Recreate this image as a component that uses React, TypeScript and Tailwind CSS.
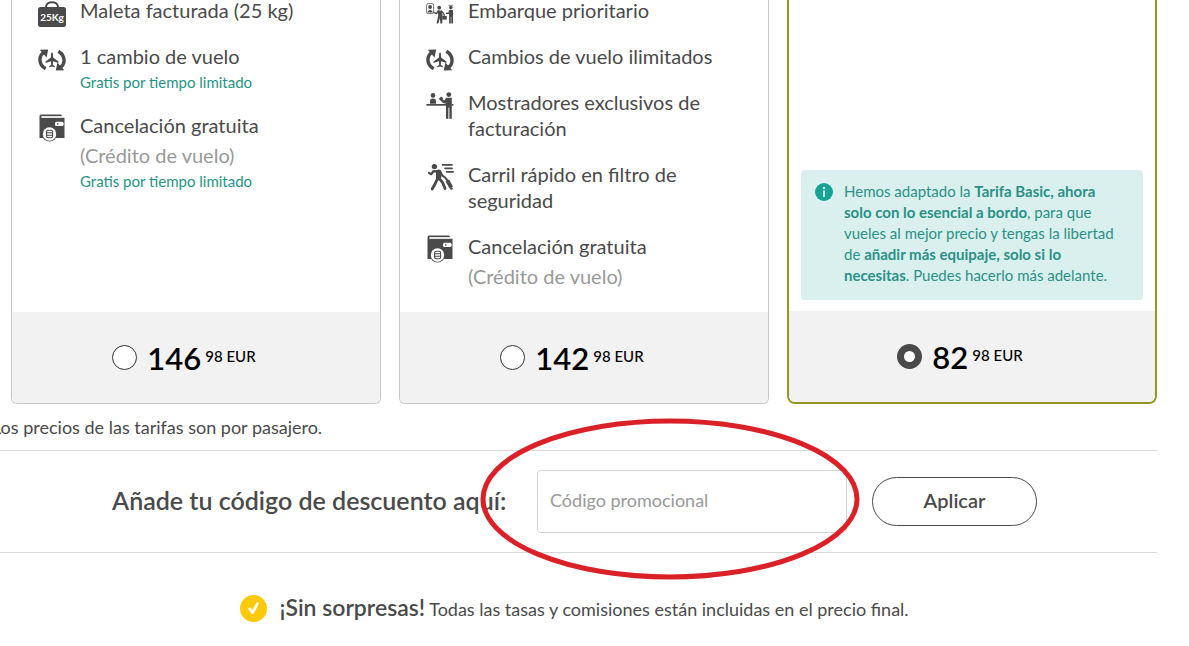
import type { ReactNode } from "react";

function BagIcon() {
  return (
    <svg viewBox="0 0 30 28" className="h-7 w-7.5" aria-hidden="true">
      <path d="M9 8 C9 1.5 21 1.5 21 8" fill="none" stroke="#4a4a4a" strokeWidth="2" />
      <rect x="1" y="8" width="28" height="20" rx="2.5" fill="#4a4a4a" />
      <text x="15" y="22" textAnchor="middle" fontSize="10" fontWeight="700" fill="#fff" fontFamily="Lato, sans-serif">
        25Kg
      </text>
    </svg>
  );
}

function ChangeIcon() {
  return (
    <svg viewBox="0 0 28 28" className="h-7 w-7" aria-hidden="true">
      <g fill="none" stroke="#4a4a4a" strokeWidth="3.4">
        <path d="M7.6 23.8 C-0.2 19 0.6 10 6.6 7.2" />
        <path d="M20.4 6.2 C28.2 11 27.4 20 21.4 22.8" />
      </g>
      <path d="M1.8 4.8 L10.2 4.4 L8.6 12.4 Z" fill="#4a4a4a" />
      <path d="M26.2 25.2 L17.8 25.6 L19.4 17.6 Z" fill="#4a4a4a" />
      <path
        d="M14 7.6 C14.8 7.6 15.1 9 15.1 12.6 L20.4 16.4 V18 L15.1 16.3 L14.8 19.8 L16.8 21.3 V22.3 L14 21.5 L11.2 22.3 V21.3 L13.2 19.8 L12.9 16.3 L7.6 18 V16.4 L12.9 12.6 C12.9 9 13.2 7.6 14 7.6 Z"
        fill="#4a4a4a"
      />
    </svg>
  );
}

function WalletIcon() {
  return (
    <svg viewBox="0 0 28 28" className="h-7 w-7" aria-hidden="true">
      <path d="M3 0.6 H22.5 Q24 0.8 24 2.4 H3.6 V3.7 H26.5 V24 H1.5 V2.4 Q1.5 0.6 3 0.6 Z" fill="#4a4a4a" />
      <path d="M3.4 2.9 H24" stroke="#fff" strokeWidth="1.2" />
      <rect x="17" y="7.8" width="8.6" height="4.2" rx="1.6" fill="#fff" />
      <circle cx="19.8" cy="9.9" r="0.8" fill="#4a4a4a" />
      <circle cx="11.5" cy="20" r="7.6" fill="#4a4a4a" />
      <circle cx="11.5" cy="20" r="6.7" fill="#fff" />
      <g fill="none" stroke="#4a4a4a" strokeWidth="1.1">
        <rect x="8.6" y="16.2" width="6" height="7.6" rx="1.6" />
        <path d="M8.6 18.8 H14.6 M8.6 21.3 H14.6" />
      </g>
    </svg>
  );
}

function BoardingIcon() {
  return (
    <svg viewBox="0 0 28 28" className="h-7 w-7" aria-hidden="true">
      <rect x="0.6" y="4.6" width="7" height="10" rx="1.6" fill="none" stroke="#777" strokeWidth="1" />
      <circle cx="4.1" cy="8" r="1.9" fill="#4a4a4a" />
      <path d="M1.6 13.6 C1.6 10.2 6.6 10.2 6.6 13.6 Z" fill="#4a4a4a" />
      <circle cx="13.2" cy="8.7" r="1.9" fill="#4a4a4a" />
      <path d="M13 11.6 L10.4 14.4 L7.4 13.4" fill="none" stroke="#4a4a4a" strokeWidth="1.4" />
      <path d="M11.4 11.4 L16 11.4 L16.6 17.6 L16.2 24.6 H14.4 L13.8 19 L12.4 24.6 H10.6 L12.2 16.6 Z" fill="#4a4a4a" />
      <path d="M16 12.4 L18.2 15.6 V17.4" fill="none" stroke="#4a4a4a" strokeWidth="1.3" />
      <rect x="16.4" y="17" width="4.4" height="3.6" fill="#4a4a4a" />
      <rect x="22.4" y="5.8" width="4.6" height="1.2" rx="0.6" fill="#999" />
      <circle cx="24.8" cy="8.6" r="1.8" fill="#4a4a4a" />
      <path d="M23 11 H27 V24.6 H25.3 V18 H24.8 V24.6 H23.1 V15 L20 15.2 V13.8 L22.6 13.4 Z" fill="#4a4a4a" />
    </svg>
  );
}

function CounterIcon() {
  return (
    <svg viewBox="0 0 28 28" className="h-7 w-7" aria-hidden="true">
      <g fill="#4a4a4a">
        <circle cx="7" cy="4.4" r="2.3" />
        <path d="M4 12.8 V10 Q4 7.4 7 7.4 Q10 7.4 10 10 V12.8 Z" />
        <rect x="0.4" y="13" width="19.6" height="1.7" />
        <rect x="25.4" y="13" width="2" height="1.7" />
        <circle cx="22.8" cy="3.6" r="2.4" />
        <path d="M20.2 6.8 H25.8 V27.8 H23.4 V16.8 H22.4 V27.8 H20 V12.8 L17.2 12 L12.8 8 L14 6.6 L18.2 9.4 Z" />
        <path d="M15 5.4 L17.4 7.2 L16.2 8.8 L13.8 7 Z" />
      </g>
    </svg>
  );
}

function FastLaneIcon() {
  return (
    <svg viewBox="0 0 28 28" className="h-7 w-7" aria-hidden="true">
      <g fill="none" stroke="#4a4a4a" strokeLinecap="round" strokeLinejoin="round">
        <path d="M16.6 1.8 H26 M19 5.3 H26 M20.6 8.8 H27.2" strokeWidth="1.7" />
        <path d="M11.6 8.4 L7.4 8.2 L5.4 11.2 L3 10" strokeWidth="2.2" />
        <path d="M12.6 9.2 L12.6 14.6" strokeWidth="5.4" />
        <path d="M11.6 15.6 L9.4 20.2 L6.2 26" strokeWidth="2.8" />
        <path d="M13.4 15.6 L16.6 19.6 L19 25.6" strokeWidth="2.8" />
        <path d="M14.4 8.6 L16.4 12.6 L19.4 14.8 L21.2 17.2" strokeWidth="2" />
      </g>
      <circle cx="8.4" cy="3.6" r="2.7" fill="#4a4a4a" />
      <path d="M19.6 18.4 L23 16.6 L27 23.4 L23.6 25.4 Z" fill="#4a4a4a" />
      <circle cx="25.4" cy="25.5" r="1.3" fill="#4a4a4a" />
    </svg>
  );
}

type Feature = { icon: ReactNode; title: string; detail?: string; promo?: string };

const plusFeatures: Feature[] = [
  { icon: <BagIcon />, title: "Maleta facturada (25 kg)" },
  { icon: <ChangeIcon />, title: "1 cambio de vuelo", promo: "Gratis por tiempo limitado" },
  {
    icon: <WalletIcon />,
    title: "Cancelación gratuita",
    detail: "(Crédito de vuelo)",
    promo: "Gratis por tiempo limitado",
  },
];

const premiumFeatures: Feature[] = [
  { icon: <BoardingIcon />, title: "Embarque prioritario" },
  { icon: <ChangeIcon />, title: "Cambios de vuelo ilimitados" },
  { icon: <CounterIcon />, title: "Mostradores exclusivos de facturación" },
  { icon: <FastLaneIcon />, title: "Carril rápido en filtro de seguridad" },
  { icon: <WalletIcon />, title: "Cancelación gratuita", detail: "(Crédito de vuelo)" },
];

function FeatureList({ items }: { items: Feature[] }) {
  return (
    <ul className="-mt-[3px] flex flex-col gap-5 pr-10 pb-[23px] pl-6">
      {items.map((item) => (
        <li key={item.title} className="flex gap-3">
          <span className="flex h-[26px] w-8 shrink-0 justify-center pt-0.5">{item.icon}</span>
          <div>
            <p className="text-[20px] leading-[26px]">{item.title}</p>
            {item.detail && <p className="mt-1 text-[20px] leading-[26px] text-[#999]">{item.detail}</p>}
            {item.promo && <p className="mt-1 text-[15px] leading-[19px] text-[#1f9484]">{item.promo}</p>}
          </div>
        </li>
      ))}
    </ul>
  );
}

function FareCard({ price, selected, children }: { price: string; selected?: boolean; children: ReactNode }) {
  return (
    <div
      className={
        selected
          ? "flex flex-col overflow-hidden rounded-b-lg border-2 border-t-0 border-[#93991f]"
          : "flex flex-col overflow-hidden rounded-b-md border border-t-0 border-[#c8c8c8]"
      }
    >
      <div className="flex flex-1 flex-col">{children}</div>
      <label className="flex h-[91px] items-center justify-center bg-[#f2f2f2] pr-6 text-black">
        <input
          type="radio"
          name="fare"
          defaultChecked={selected}
          className="mr-2.5 size-[25px] appearance-none rounded-full border border-[#333] bg-white checked:border-[7px] checked:border-[#4a4a4a]"
        />
        <span className="text-[31px] leading-9 font-semibold">{price}</span>
        <span className="ml-1 pb-1 text-[15px] leading-5 font-medium">98 EUR</span>
      </label>
    </div>
  );
}

export default function App() {
  return (
    <main className="overflow-hidden bg-white pb-6 font-['Lato',sans-serif] text-[#4a4a4a]">
      <div className="mr-8 ml-[11px] grid grid-cols-3 gap-[18px]">
        <FareCard price="146">
          <FeatureList items={plusFeatures} />
        </FareCard>
        <FareCard price="142">
          <FeatureList items={premiumFeatures} />
        </FareCard>
        <FareCard price="82" selected>
          <div className="mx-3 mt-auto mb-[11px] flex gap-[11px] rounded-sm bg-[#daf0ee] pt-[11px] pr-6 pb-3.5 pl-3.5 text-[15px] leading-[21px] text-[#2a9187]">
            <svg viewBox="0 0 18 18" className="mt-0.5 size-[18px] shrink-0" aria-hidden="true">
              <circle cx="9" cy="9" r="9" fill="#16a394" />
              <circle cx="9" cy="5" r="1.2" fill="#daf0ee" />
              <rect x="8.1" y="7.4" width="1.8" height="6.4" fill="#daf0ee" />
            </svg>
            <p>
              Hemos adaptado la <b>Tarifa Basic, ahora solo con lo esencial a bordo</b>, para que vueles al mejor
              precio y tengas la libertad de <b>añadir más equipaje, solo si lo necesitas</b>. Puedes hacerlo más
              adelante.
            </p>
          </div>
        </FareCard>
      </div>

      <div className="mr-8 -ml-2">
        <p className="mt-3 text-[18px] leading-[22px]">Los precios de las tarifas son por pasajero.</p>
        <form
          className="mt-3 flex h-[103px] items-center justify-center gap-[25px] border-y border-[#d8d8d8]"
          onSubmit={(event) => event.preventDefault()}
        >
          <label htmlFor="promo" className="w-[400px] pb-1 text-[25px] leading-8 font-semibold">
            Añade tu código de descuento aquí:
          </label>
          <div className="relative w-[310px]">
            <input
              id="promo"
              type="text"
              placeholder="Código promocional"
              className="h-[63px] w-full rounded-sm border border-[#d5d5d5] px-3 pb-1 text-[18px] placeholder:text-[#999]"
            />
            <svg
              viewBox="0 0 380 162"
              className="pointer-events-none absolute -top-[52px] -left-[57px] h-[162px] w-[380px] max-w-none"
              aria-hidden="true"
            >
              <ellipse cx="190" cy="81" rx="187" ry="78" fill="none" stroke="#da2128" strokeWidth="5" />
            </svg>
          </div>
          <button
            type="submit"
            className="h-[49px] w-[165px] rounded-full border border-[#4a4a4a] pb-1 text-[20px] font-semibold"
          >
            Aplicar
          </button>
        </form>
        <div className="mt-[38px] flex items-center justify-center">
          <svg viewBox="0 0 27 27" className="mr-3 size-[27px]" aria-hidden="true">
            <circle cx="13.5" cy="13.5" r="13.5" fill="#fdca0b" />
            <path d="M9.8 13.8 L12.6 17.6 L17.4 8.6" fill="none" stroke="#fff" strokeWidth="2.8" strokeLinecap="round" strokeLinejoin="round" />
          </svg>
          <p className="text-[18px] leading-8">
            <strong className="text-[23px] font-semibold">¡Sin sorpresas!</strong> Todas las tasas y comisiones están
            incluidas en el precio final.
          </p>
        </div>
      </div>
    </main>
  );
}
